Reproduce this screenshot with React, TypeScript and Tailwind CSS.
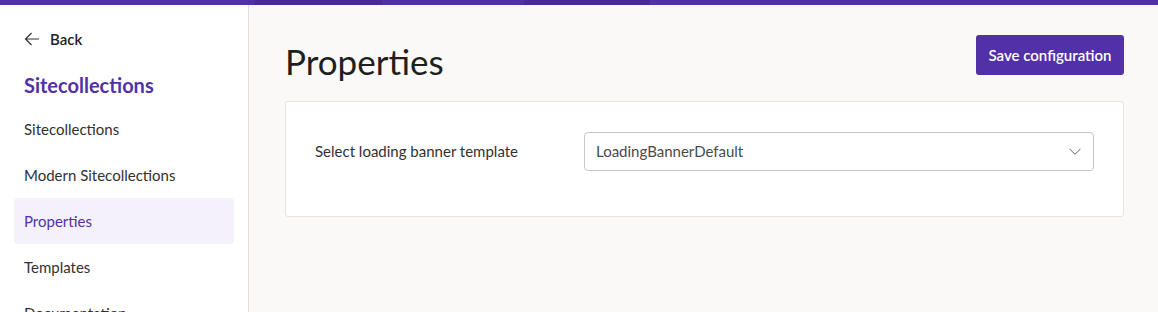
const navItems = [
  { label: "Sitecollections" },
  { label: "Modern Sitecollections" },
  { label: "Properties", active: true },
  { label: "Templates" },
  { label: "Documentation" },
];

export default function App() {
  return (
    <div
      className="flex h-[312px] w-[1158px] flex-col overflow-hidden bg-[#faf9f8] text-[#323130]"
      style={{ fontFamily: "Lato, 'Open Sans', sans-serif" }}
    >
      {/* top progress bar */}
      <div className="flex h-[5px] shrink-0">
        <div className="w-[255px] bg-[#5230a8]" />
        <div className="w-[127px] bg-[#4a2896]" />
        <div className="w-[142px] bg-[#5230a8]" />
        <div className="w-[126px] bg-[#4a2896]" />
        <div className="flex-1 bg-[#5230a8]" />
      </div>

      <div className="flex min-h-0 flex-1">
        <aside className="w-[249px] shrink-0 border-r border-[#e1dfdd] bg-white">
          <div className="box-content flex h-[30px] items-center gap-[10px] pt-[19px] pb-[14px] pl-[24px]">
            <svg width="16" height="14" viewBox="0 0 16 14" fill="none" stroke="#323130" strokeWidth="1.2">
              <path d="M15 7H1.5M7.5 1 1.5 7l6 6" />
            </svg>
            <span className="text-[15px] font-semibold text-[#201f1e]">Back</span>
          </div>
          <h2 className="pl-[24px] text-[20px] leading-[34px] font-bold text-[#5230a8]">
            Sitecollections
          </h2>
          <nav className="mt-[4px] flex flex-col px-[14px]">
            {navItems.map((item) => (
              <a
                key={item.label}
                className={
                  "flex h-[46px] items-center rounded-[4px] px-[10px] text-[15px] " +
                  (item.active ? "bg-[#f4f1fc] text-[#5230a8]" : "text-[#323130]")
                }
              >
                {item.label}
              </a>
            ))}
          </nav>
        </aside>

        <main className="flex-1 pl-[36px] pr-[34px]">
          <div className="flex items-start justify-between pt-[30px]">
            <h1 className="-mt-[4px] text-[35px] leading-[60px] text-[#201f1e]">Properties</h1>
            <button className="h-[40px] w-[148px] rounded-[3px] bg-[#5230a8] text-[15px] font-semibold text-white">
              Save configuration
            </button>
          </div>
          <div className="mt-[10px] flex h-[116px] items-start rounded-[3px] border border-[#e6e4e2] bg-white px-[29px] pt-[30px]">
            <label className="flex h-[39px] w-[269px] shrink-0 items-center text-[15px] text-[#323130]">
              Select loading banner template
            </label>
            <div className="flex h-[39px] flex-1 items-center justify-between rounded-[4px] border border-[#c8c6c4] pl-[11px] pr-[12px] text-[15px] text-[#4a4a4a]">
              <span>LoadingBannerDefault</span>
              <svg width="12" height="7" viewBox="0 0 12 7" fill="none" stroke="#605e5c" strokeWidth="1">
                <path d="M0.5 0.8 6 6.3l5.5-5.5" />
              </svg>
            </div>
          </div>
        </main>
      </div>
    </div>
  );
}
